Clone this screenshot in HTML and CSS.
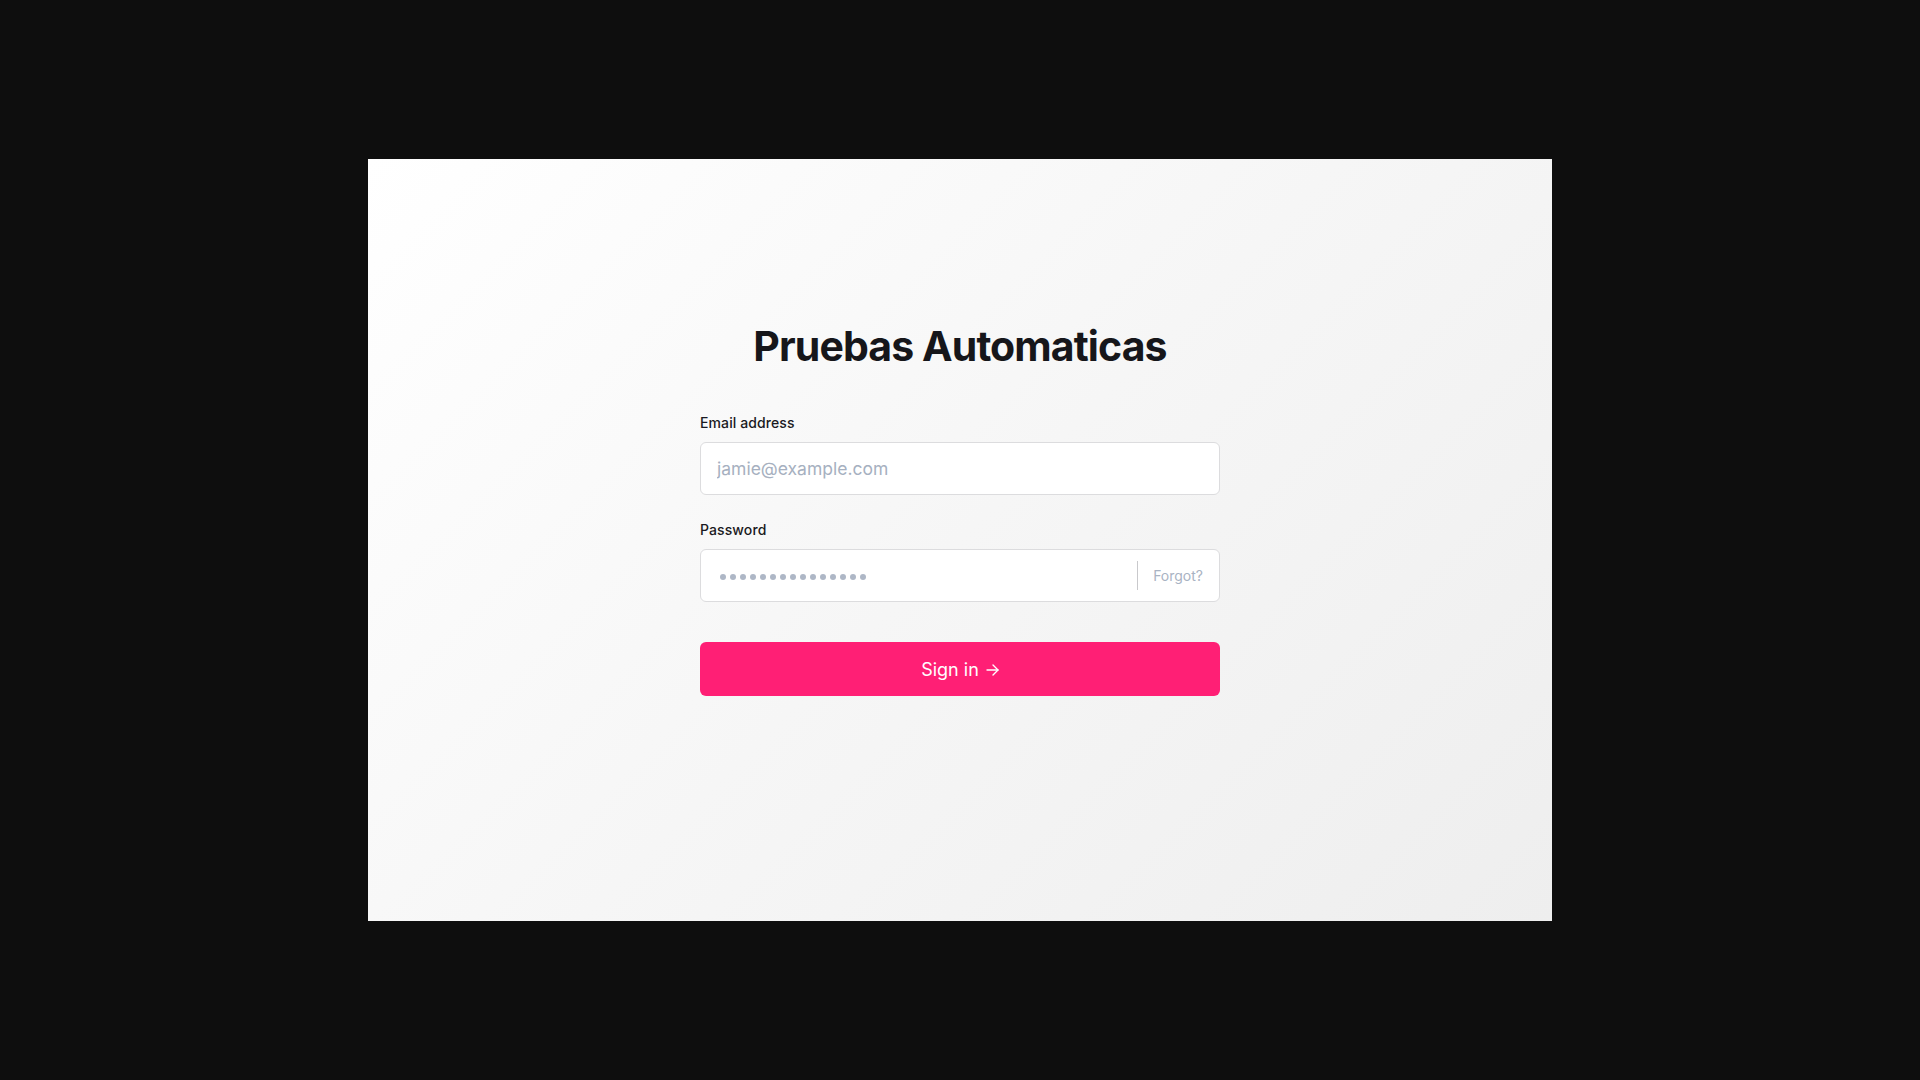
FILE: index.html
```html
<!DOCTYPE html>
<html lang="en">
<head>
<meta charset="utf-8">
<title>Pruebas Automaticas</title>
<link rel="stylesheet" href="styles.css">
</head>
<body>
<div class="stage">
  <main class="card">
    <h1 class="title">Pruebas Automaticas</h1>
    <form class="form">
      <div class="field">
        <label class="label" for="email">Email address</label>
        <div class="input-box">
          <input class="input" id="email" type="email" placeholder="jamie@example.com">
        </div>
      </div>
      <div class="field">
        <label class="label" for="password">Password</label>
        <div class="input-box">
          <div class="dots" id="password">
            <span></span><span></span><span></span><span></span><span></span>
            <span></span><span></span><span></span><span></span><span></span>
            <span></span><span></span><span></span><span></span><span></span>
          </div>
          <span class="divider"></span>
          <a class="forgot" href="#">Forgot?</a>
        </div>
      </div>
      <button class="submit" type="button">
        <span>Sign in</span>
        <svg class="arrow" width="13" height="12" viewBox="0 0 13 12" fill="none" stroke="#ffffff" stroke-width="1.4" stroke-linecap="round" stroke-linejoin="round"><path d="M1 6h11"/><path d="M7 1l5 5-5 5"/></svg>
      </button>
    </form>
  </main>
</div>
</body>
</html>
```

FILE: styles.css
```css
* { box-sizing: border-box; }
html, body { margin: 0; padding: 0; }
body {
  background: #0e0e0e;
  font-family: Inter, "Noto Sans", sans-serif;
  width: 1920px;
  height: 1080px;
}
.stage {
  width: 100%;
  height: 100%;
  display: flex;
  align-items: center;
  justify-content: center;
}
.card {
  width: 1184px;
  height: 762px;
  background: linear-gradient(135deg, #ffffff 0%, #f6f6f6 50%, #eeeeee 100%);
  display: flex;
  flex-direction: column;
  align-items: center;
  padding-top: 161px;
}
.title {
  margin: 0;
  font-size: 41px;
  line-height: 52px;
  font-weight: 700;
  color: #16161a;
  letter-spacing: -0.9px;
}
.form {
  width: 520px;
  margin-top: 41px;
  display: flex;
  flex-direction: column;
}
.field { display: flex; flex-direction: column; margin-bottom: 25px; }
.field:last-of-type { margin-bottom: 40px; }
.label {
  font-size: 14px;
  line-height: 20px;
  font-weight: 500;
  color: #1a1a22;
  margin-bottom: 9px;
  letter-spacing: 0.1px;
}
.input-box {
  height: 53px;
  background: #ffffff;
  border: 1px solid #dcdcde;
  border-radius: 6px;
  display: flex;
  align-items: center;
  padding: 0 16px;
}
.input {
  flex: 1;
  border: 0;
  outline: none;
  background: transparent;
  font-family: Inter, "Noto Sans", sans-serif;
  font-size: 17.5px;
  color: #1a1a22;
  padding: 0;
}
.input::placeholder { color: #a6b0c0; }
.dots {
  flex: 1;
  display: flex;
  gap: 4px;
  padding-left: 3px;
  margin-top: 2px;
}
.dots span {
  width: 6px;
  height: 6px;
  border-radius: 50%;
  background: #aeb7c6;
}
.divider {
  width: 1px;
  height: 29px;
  background: #c9c9cc;
  margin-right: 15px;
}
.forgot {
  font-size: 14px;
  color: #a9b3c3;
  text-decoration: none;
}
.submit {
  height: 54px;
  border: 0;
  border-radius: 6px;
  background: #ff1f75;
  color: #ffffff;
  font-family: Inter, "Noto Sans", sans-serif;
  font-size: 18px;
  font-weight: 400;
  display: flex;
  align-items: center;
  justify-content: center;
  gap: 7px;
  cursor: pointer;
}
.arrow { margin-top: 1px; }
```
